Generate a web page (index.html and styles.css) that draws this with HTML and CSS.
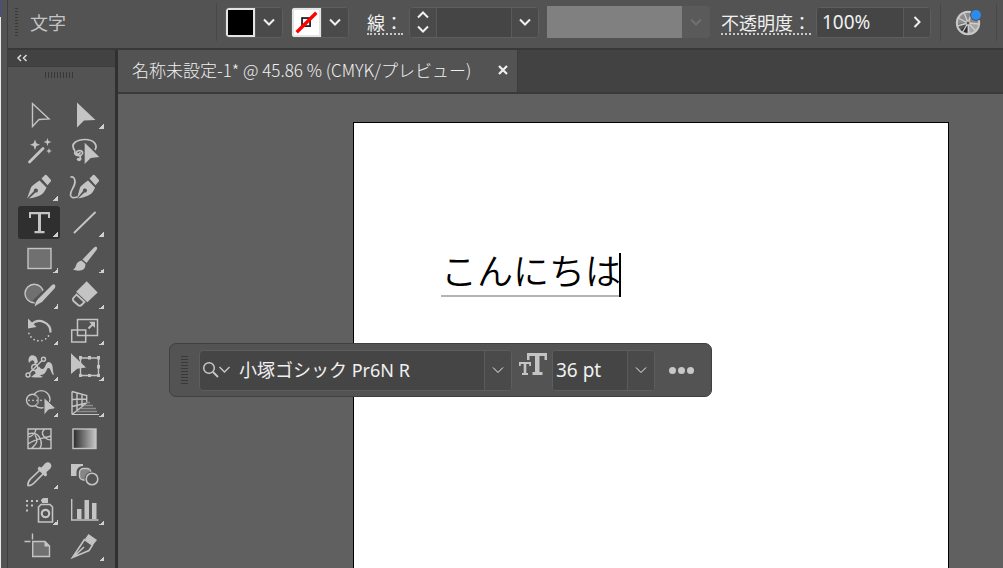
FILE: index.html
```
<!DOCTYPE html>
<html lang="ja">
<head>
<meta charset="utf-8">
<title>名称未設定-1</title>
<link rel="stylesheet" href="styles.css">
</head>
<body>
<svg class="defs" aria-hidden="true">
  <defs>
    <symbol id="chev" viewBox="0 0 12 8"><path d="M1 1.500 6 6.500 11 1.500" fill="none" stroke="currentColor"/></symbol>
    <linearGradient id="ramp"><stop offset="0" stop-color="#2a2a2a"/><stop offset="1" stop-color="#c8c8c8"/></linearGradient>
  </defs>
</svg>
<div class="window">
  <div class="edge"></div>
  <div class="app">
    <header class="control-bar">
      <span class="grip-v"></span>
      <span class="mode">文字</span>
      <span class="sep"></span>
      <div class="combo swatch-combo">
        <button class="swatch fill" aria-label="塗り"></button>
        <button class="drop" aria-label="塗りを選択"><svg class="chev"><use href="#chev"/></svg></button>
      </div>
      <div class="combo swatch-combo">
        <button class="swatch stroke" aria-label="線"><svg viewBox="0 0 28 28"><rect x="9" y="9" width="9" height="9" fill="none" stroke="#222" stroke-width="2"/><path d="M3 25 25 3" stroke="#f00" stroke-width="3.800"/></svg></button>
        <button class="drop" aria-label="線を選択"><svg class="chev"><use href="#chev"/></svg></button>
      </div>
      <label class="name stroke-name" for="weight">線：</label>
      <div class="combo weight-combo">
        <div class="stepper">
          <button aria-label="上げる"><svg class="chev up"><use href="#chev"/></svg></button>
          <button aria-label="下げる"><svg class="chev"><use href="#chev"/></svg></button>
        </div>
        <input class="field weight" id="weight" type="text">
        <button class="drop" aria-label="線幅を選択"><svg class="chev"><use href="#chev"/></svg></button>
      </div>
      <div class="profile">
        <span class="profile-view"></span>
        <button class="profile-drop" disabled aria-label="プロファイル"><svg class="chev"><use href="#chev"/></svg></button>
      </div>
      <label class="name opacity-name" for="opacity">不透明度：</label>
      <div class="combo opacity-combo">
        <input class="field opacity" id="opacity" type="text" value="100%">
        <button class="drop" aria-label="不透明度を選択"><svg class="chev right"><use href="#chev"/></svg></button>
      </div>
      <span class="sep"></span>
      <button class="recolor" aria-label="オブジェクトを再配色">
        <svg viewBox="0 0 28 28">
          <circle cx="13" cy="15" r="11" fill="#8c8c8c"/>
          <path d="M13 15 5 22.500A11 11 0 0 0 12 26z" fill="#2e2e2e"/>
          <path d="M13 15 2 16A11 11 0 0 0 5 22.500z" fill="#555"/>
          <path d="M13 15H24A11 11 0 0 1 14 26z" fill="#a4a4a4"/>
          <path d="M13 15 9 4.500M13 15 17 4.500M13 15 3 10M13 15 2 18M13 15 7 25M13 15 14 26M13 15 21 23M13 15 24 16" stroke="#d0d0d0" stroke-width="1.300"/>
          <circle cx="13" cy="15" r="11.200" fill="none" stroke="#c8c8c8" stroke-width="2"/>
          <circle cx="13" cy="15" r="2" fill="#555" stroke="#ccc"/>
          <circle cx="21" cy="7" r="6" fill="#535353"/><circle cx="21" cy="7" r="5" fill="#2b8ceb"/>
        </svg>
      </button>
      <span class="sep"></span>
    </header>

    <div class="workspace">
      <aside class="tools">
        <button class="collapse" aria-label="折りたたむ"><svg viewBox="0 0 12 8"><path d="M5 1 2 4 5 7M10.500 1 7.500 4 10.500 7" fill="none" stroke="#ddd" stroke-width="1.500"/></svg></button>
        <span class="grip-h"></span>
        <div class="tool-grid">
          <button class="tool" aria-label="選択"><svg viewBox="0 0 42 33"><path class="l" d="M14.500 5.500V28.500L21 21.500 31 21z"/></svg></button>
          <button class="tool more" aria-label="ダイレクト選択"><svg viewBox="0 0 42 33"><path class="f" d="M13 4.500V29.500L20 22.500 31.500 22z"/></svg></button>

          <button class="tool" aria-label="自動選択"><svg viewBox="0 0 42 33"><path class="l round" stroke-width="2.800" d="M11.500 28 25 14.500"/><path class="f" d="M17 5.500 18.400 9.300 22 10.700 18.400 12.100 17 16 15.600 12.100 12 10.700 15.600 9.300zM29.500 4 30.500 7 33.500 8 30.500 9 29.500 12 28.500 9 25.500 8 28.500 7zM31 14 31.800 16.200 34 17 31.800 17.800 31 20 30.200 17.800 28 17 30.200 16.200z"/></svg></button>
          <button class="tool" aria-label="なげなわ"><svg viewBox="0 0 42 33"><path class="l" stroke-width="1.700" d="M11 17C5 9 14 5.500 21 5.500C30 5.500 34 11 31 16M11 17C9 22 17 23 18.500 19.500C19.500 16 12.500 15.500 12.500 18.500C13 21 16.500 20 16 18M13 25C17 25 17 23 15.500 21M13 25Q16 28 17 24"/><path class="f" d="M20.700 8.700V30L26.700 24 35.300 23z"/></svg></button>

          <button class="tool more" aria-label="ペン"><svg viewBox="0 0 42 33"><path class="f" d="M9 28.500 13 17.500Q14 15.500 21.500 10.500L28.500 17.500Q26 23 23.500 24.500Q20 27 11 28.500L17.500 22.500A2 2 0 1 0 16 21zM23.500 8.500 27 5Q28 4.500 29 5.500L33 10Q33.300 11 32.500 11.800L29.500 15.200z"/></svg></button>
          <button class="tool" aria-label="曲線"><svg viewBox="0 0 42 33"><path class="f" d="M13 28.500 16 17.500Q17 15.500 24 10.500L31 17.500Q29 23 26 24.500Q22 27 14 28.500L20.500 22.500A2 2 0 1 0 19 21zM25.500 8.500 29 5Q30 4.500 31 5.500L35 10Q35.300 11 34.500 11.800L31.500 15.200z"/><path class="l round" stroke-width="1.700" d="M7 7Q10 6 11 11C11.500 17 6 20 6.500 25Q7 29 13 27"/></svg></button>

          <button class="tool more active" aria-label="文字" aria-pressed="true"><svg viewBox="0 0 42 33"><path class="f" d="M11 6H32V12H30V8.300H23V25H26.500V27.300H16.500V25H20V8.300H13V12H11z"/></svg></button>
          <button class="tool more" aria-label="直線"><svg viewBox="0 0 42 33"><path class="l round" stroke-width="1.900" d="M10.500 26.500 31 6.500"/></svg></button>

          <button class="tool more" aria-label="長方形"><svg viewBox="0 0 42 33"><rect class="l g" x="10" y="6.500" width="23" height="20"/></svg></button>
          <button class="tool more" aria-label="ブラシ"><svg viewBox="0 0 42 33"><path class="f" d="M32 4.500Q34 5.500 32.500 8L22.500 21 18.500 17.500 29.500 6Q31 4.500 32 4.500zM17.500 18.500 21.500 22Q21.500 28 16 28.500Q12 29 9 27.500Q11.500 26.500 12 23.500Q13 19.500 17.500 18.500z"/></svg></button>

          <button class="tool more" aria-label="塗りブラシ"><svg viewBox="0 0 42 33"><circle class="l g" cx="16.300" cy="15.500" r="9.300"/><path d="M36 7 17 25" stroke="#535353" stroke-width="7"/><path class="f" d="M34 7Q36 5.500 37 7Q38 8.500 36.500 10.500L24 24Q20 26 16.500 28.500Q17 24 20 21z"/></svg></button>
          <button class="tool more" aria-label="消しゴム"><svg viewBox="0 0 42 33"><path class="f" d="M22.700 3.300 33.700 14.500 23.300 24.300 12.200 13.800z"/><path class="l" stroke-width="1.800" d="M12.500 16.500 9 20.500Q8.500 22 9.500 23L14 27Q16 28.500 17.500 27L20.500 24z"/></svg></button>

          <button class="tool more" aria-label="回転"><svg viewBox="0 0 42 33"><path class="l" stroke-width="2.200" d="M13.500 10.500A11 11 0 0 1 32.500 18.500"/><path class="f" d="M10 4.500V14.500L18.500 13z"/><path class="l dots" stroke-width="1.800" d="M30.500 22A11 11 0 0 1 10.500 17.500"/></svg></button>
          <button class="tool more" aria-label="拡大・縮小"><svg viewBox="0 0 42 33"><path class="l" stroke-width="1.500" d="M13.500 5.500H33.500V21.500H13.500zM7.700 16H21.700V28H7.700z"/><path class="l" stroke-width="2" d="M24.500 14.500 29 10"/><path class="f" d="M25 7.700H31V14z"/></svg></button>

          <button class="tool more" aria-label="線幅"><svg viewBox="0 0 42 33"><path class="f" d="M11 13C9 6 14 4 17 6C21 8 19 18 24 19C28 19 27 12 31 12C36 13 34 20 36 25C33 25 33 17 30 18C28 19 29 24 23 25C16 25 16 20 17 15C16 9 14 9 11 13zM18 23 25 27Q21 28 13 27z"/><path d="M10 24.500 25.500 9.500" stroke="#535353" stroke-width="4"/><path class="l" d="M11.500 23 24 10.500"/><circle class="l" cx="10" cy="25" r="2"/><circle class="l" cx="25.500" cy="9.300" r="2"/><circle class="l" cx="16.700" cy="17.500" r="3"/></svg></button>
          <button class="tool more" aria-label="自由変形"><svg viewBox="0 0 42 33"><path class="l" d="M16.500 8H34.500V25.500H16.500z"/><path class="f" d="M15 6H18V9.500H15zM24 6H27V9.500H24zM33 6H36V9.500H33zM33 15H36V18.500H33zM33 24H36V27H33zM24 24H27V27H24zM15 24H18V27H15z"/><path class="f" d="M7 3.300V24L13.300 18.700 22 17.500z"/></svg></button>

          <button class="tool more" aria-label="シェイプ形成"><svg viewBox="0 0 42 33"><circle class="l" cx="23.300" cy="13.300" r="8.700"/><circle cx="14.500" cy="14.300" r="6" fill="#535353"/><circle class="l" cx="14.500" cy="14.300" r="6"/><path d="M18 9.500A6 6 0 0 1 18 19" fill="none" stroke="#8d8d8d" stroke-width="1.500"/><path class="l dots" stroke-width="1.800" d="M11 14.300H25"/><path class="f cut" d="M26 11.500V29.500L30.500 24 38 22.500z"/></svg></button>
          <button class="tool more" aria-label="遠近グリッド"><svg viewBox="0 0 42 33"><path class="l" d="M8 5.500V28.500M8 5.500 22.700 9.500V17L8 28.500M13 7V24.500M18 8V21M8 13.500 22.700 13M8 20.500 22.700 17"/><path d="M22 16.500H26M20 19.500H29M17 22.500H32M13 25.500H33" stroke="#8d8d8d"/><path class="l" stroke-width="1" d="M8 28.500H35"/></svg></button>

          <button class="tool" aria-label="メッシュ"><svg viewBox="0 0 42 33"><path class="l" d="M10 7H33V26.500H10zM10 12Q20 9 23 19Q24 23 22 26M18 7Q17 13 11 15M27 7C20 12 29 18 33 18M10 22C18 16 24 17 33 14M14 26C18 22 21 20 17 13"/></svg></button>
          <button class="tool" aria-label="グラデーション"><svg viewBox="0 0 42 33"><rect class="l ramp" x="9" y="7" width="23" height="19.500"/></svg></button>

          <button class="tool more" aria-label="スポイト"><svg viewBox="0 0 42 33"><path class="l" stroke-width="1.700" d="M22 12 12 21.500Q9.500 25 10 27.500Q13 28 15.500 25.500L25.500 15.500"/><path class="f" d="M21 8.500 23.500 9.500 27 5.500Q30 3 32.500 5.500Q34.500 8 32 11L28.500 14 29 17.500 27 18.500 19.500 11z"/></svg></button>
          <button class="tool" aria-label="ブレンド"><svg viewBox="0 0 42 33"><path class="f" d="M7 6H19V18H7z"/><rect x="14.500" y="10" width="12.500" height="12.500" rx="4" fill="none" stroke="#535353" stroke-width="4"/><rect class="l mid" x="15.500" y="10.500" width="11.500" height="11.500" rx="4"/><circle cx="28" cy="21" r="7.500" fill="#535353"/><circle class="l" stroke-width="1.600" cx="28" cy="21" r="5.800"/></svg></button>

          <button class="tool more" aria-label="シンボルスプレー"><svg viewBox="0 0 42 33"><path class="l" stroke-width="1.600" d="M20.500 13 23 10.500H32L34.500 13V28H20.500z"/><circle class="l" stroke-width="2.200" cx="27.500" cy="19.500" r="3.700"/><path class="f" d="M23 6 25 4H30V9H24V7.500H23zM8 6h2v2H8zM13 6h2v2H13zM18 6h2v2H18zM8 10.500h2v2H8zM13 10.500h2v2H13zM8 15.500h2v2H8z"/></svg></button>
          <button class="tool more" aria-label="棒グラフ"><svg viewBox="0 0 42 33"><path class="l" d="M7.700 5V26H34.500"/><path class="f" d="M13 15h4.500v10H13zM20.500 6h4.500v19H20.500zM28 9h4.500v16H28z"/></svg></button>

          <button class="tool" aria-label="アートボード"><svg viewBox="0 0 42 33"><path class="l" d="M14.500 3.500V9.500M6.500 11.500H12.500"/><path class="l g" d="M14.700 11.500H27L31.500 16V26.500H14.700z"/><path class="f" d="M26.500 11 32 16.500H26.500z"/></svg></button>
          <button class="tool more" aria-label="スライス"><svg viewBox="0 0 42 33"><path class="l" stroke-width="1.600" d="M20.500 9.500 8.500 27.500 25 20.500 28.500 15zM9 27.500 20 17"/><path class="f" d="M21 9 24.500 4 33 10 28.500 15.500z"/></svg></button>
        </div>
      </aside>

      <main class="document">
        <div class="tabs">
          <div class="tab">
            <span>名称未設定-1* @ 45.86 % (CMYK/プレビュー)</span>
            <button class="close" aria-label="閉じる"><svg viewBox="0 0 10 10"><path d="M1 1 9 9M9 1 1 9" stroke="#f0f0f0" stroke-width="2.200"/></svg></button>
          </div>
        </div>
        <div class="canvas">
          <div class="artboard"><p class="type-line">こんにちは<span class="caret"></span></p></div>
          <div class="task-bar">
            <span class="grip-v"></span>
            <div class="combo font-combo">
              <svg class="search" viewBox="0 0 28 18"><circle cx="7" cy="7" r="5.300" fill="none" stroke="#c8c8c8" stroke-width="1.500"/><path d="M11 11 16 16" stroke="#c8c8c8" stroke-width="1.800"/><path d="M17.500 6 22.500 11 27.500 6" fill="none" stroke="#c8c8c8" stroke-width="1.400"/></svg>
              <select class="font-select" aria-label="フォント"><option>小塚ゴシック Pr6N R</option></select>
              <span class="drop" aria-hidden="true"><svg class="chev thin"><use href="#chev"/></svg></span>
            </div>
            <svg class="size-icon" viewBox="0 0 28 24"><path fill="#c4c4c4" d="M8 0H28V7H25.500V3H20.500V19H23.500V22H13.500V19H16V3H10.500V7H8zM0 9H12V13H10.200V11H7.300V20H9V22H3V20H4.700V11H1.800V13H0z"/></svg>
            <div class="combo size-combo">
              <input class="field size" type="text" value="36 pt" aria-label="フォントサイズ">
              <button class="drop" aria-label="サイズを選択"><svg class="chev thin"><use href="#chev"/></svg></button>
            </div>
            <button class="dots-button" aria-label="その他"><i></i><i></i><i></i></button>
          </div>
        </div>
      </main>
    </div>
  </div>
</div>
</body>
</html>
```
FILE: styles.css
```
* { box-sizing: border-box; }
body {
  margin: 0;
  background: #535353;
  color: #f0f0f0;
  font-family: "Noto Sans", "Noto Sans CJK JP", sans-serif;
  font-size: 18px;
  overflow: hidden;
}
button, input, select {
  margin: 0;
  padding: 0;
  border: 0;
  background: none;
  color: inherit;
  font: inherit;
}
button { display: flex; align-items: center; justify-content: center; }
svg { display: block; }
.defs { position: absolute; width: 0; height: 0; }

.window { display: flex; height: 100vh; }
.edge {
  flex: 0 0 8px;
  border-right: 1px solid #3f3f3f;
  background: linear-gradient(#4a4a98 17px, #e8e8e8 17px) 0 0 / 1px 100% no-repeat, #535353;
}
.app { flex: 1; min-width: 0; display: flex; flex-direction: column; }

/* Control bar */
.control-bar {
  flex: 0 0 50px;
  display: flex;
  align-items: center;
  padding: 0 6px 4px 7px;
  border-bottom: 2px solid #383838;
}
.control-bar > * { flex-shrink: 0; }
.grip-v {
  width: 3px;
  height: 28px;
  background: repeating-linear-gradient(#383838 0 1px, transparent 1px 3px);
}
.mode { width: 198px; padding-left: 12px; color: #c4c4c4; }
.sep { width: 1px; height: 38px; background: #484848; }
.combo {
  display: flex;
  height: 31px;
  border: 1px solid #5e5e5e;
  border-radius: 4px;
  background: #454545;
  overflow: hidden;
}
.drop {
  width: 27px;
  display: flex;
  align-items: center;
  justify-content: center;
  border-left: 1px solid #5a5a5a;
  background: #4a4a4a;
}
.chev { width: 12px; height: 8px; stroke-width: 2; }
.chev.thin { stroke-width: 1; }
.chev.up { transform: rotate(180deg); }
.chev.right { transform: rotate(-90deg); }
.swatch-combo { width: 58px; margin-left: 8px; }
.swatch-combo .drop { flex: 1; }
.swatch { width: 29px; height: 29px; border: 2px solid #e4e4e4; }
.swatch.fill { background: #000; }
.swatch.stroke { background: #fff; }
.swatch svg { width: 25px; height: 25px; }
.name {
  padding-top: 3px;
  line-height: 20px;
  border-bottom: 2px dotted #c8c8c8;
  white-space: nowrap;
}
.stroke-name { margin-left: 18px; }
.weight-combo { margin-left: 6px; width: 130px; }
.stepper { width: 27px; display: flex; flex-direction: column; background: #4a4a4a; border-right: 1px solid #5a5a5a; }
.stepper button { flex: 1; }
.field { min-width: 0; flex: 1; background: #454545; padding-left: 5px; outline: 0; font-size: 19px; }
.profile { display: flex; height: 32px; width: 163px; margin-left: 8px; }
.profile-view { flex: 1; background: #808080; }
.profile-drop { width: 28px; color: #707070; background: #5a5a5a; border-radius: 0 4px 4px 0; }
.opacity-name { margin-left: 11px; }
.opacity-combo { width: 115px; margin: 0 9px 0 5px; }
.recolor { margin: 0 auto; }
.recolor svg { width: 28px; height: 28px; }

/* Tool panel */
.workspace { flex: 1; min-height: 0; display: flex; }
.tools {
  flex: 0 0 110px;
  border-right: 3px solid #303030;
  overflow: hidden;
}
.collapse {
  width: 100%;
  height: 17px;
  justify-content: flex-start;
  padding-left: 8px;
  background: #424242;
  border-bottom: 1px solid #3c3c3c;
}
.collapse svg { width: 12px; height: 8px; }
.grip-h {
  display: block;
  width: 29px;
  height: 6px;
  margin: 5px 0 0 37px;
  background: repeating-linear-gradient(90deg, #383838 0 1px, transparent 1px 3px);
}
.tool-grid {
  display: grid;
  grid-template-columns: 42px 42px;
  gap: 3px 4px;
  margin: 20px 0 0 10px;
}
.tool { position: relative; height: 33px; border-radius: 3px; }
.tool svg { width: 42px; height: 33px; stroke-width: 1.4; }
.tool.active { background: #2f2f2f; }
.more::after {
  content: "";
  position: absolute;
  right: 2px;
  bottom: 2px;
  width: 5px;
  height: 5px;
  background: linear-gradient(135deg, transparent 50%, #d0d0d0 50%);
}
.l { fill: none; stroke: #c4c4c4; }
.g { fill: #707070; }
.mid { fill: #858585; }
.ramp { fill: url(#ramp); }
.f { fill: #c4c4c4; }
.round { stroke-linecap: round; }
.dots { stroke-linecap: round; stroke-dasharray: 0 4; }
.cut { stroke: #535353; stroke-width: 1; }

/* Document */
.document { flex: 1; min-width: 0; display: flex; flex-direction: column; }
.tabs { flex: 0 0 44px; display: flex; background: #424242; border-bottom: 2px solid #3a3a3a; }
.tab {
  width: 400px;
  display: flex;
  align-items: center;
  padding: 0 9px 3px 14px;
  background: #535353;
  border-right: 1px solid #3c3c3c;
  font-family: "Noto Sans CJK JP", sans-serif;
  font-size: 17px;
  font-weight: 300;
  white-space: nowrap;
}
.close { margin-left: auto; }
.close svg { width: 10px; height: 10px; }
.canvas {
  flex: 1;
  min-height: 0;
  position: relative;
  display: flex;
  padding: 28px 54px 0 235px;
  background: #606060;
}
.artboard {
  flex: 1;
  padding: 126px 0 0 87px;
  background: #fff;
  border: 1px solid #000;
  border-bottom: 0;
  color: #000;
}
.type-line {
  display: inline-flex;
  height: 48px;
  margin: 0;
  border-bottom: 2px solid #b4b4b4;
  font: 350 36px/40px "Noto Sans CJK JP", sans-serif;
}
.caret { align-self: flex-end; width: 2px; height: 44px; margin: 0 0 -2px -2px; background: #000; }

/* Contextual task bar, floats over the canvas */
.task-bar {
  position: absolute;
  left: 51px;
  top: 249px;
  width: 543px;
  height: 54px;
  display: flex;
  align-items: center;
  padding: 0 17px 0 11px;
  border: 1px solid #404040;
  border-radius: 7px;
  background: #535353;
}
.task-bar .grip-v { width: 7px; margin-right: 11px; }
.task-bar .combo { height: 41px; }
.font-combo { flex: 1; align-items: stretch; }
.search { width: 28px; height: 18px; margin: 10px 0 0 2px; }
.font-select { flex: 1; min-width: 0; appearance: none; padding-left: 9px; background: #454545; }
.size-icon { width: 28px; height: 24px; margin: 0 5px 10px 7px; }
.size-combo { width: 103px; }
.size { padding-left: 3px; }
.dots-button { gap: 2px; margin-left: 14px; }
.dots-button i { width: 7px; height: 7px; border-radius: 50%; background: #c8c8c8; }
```
